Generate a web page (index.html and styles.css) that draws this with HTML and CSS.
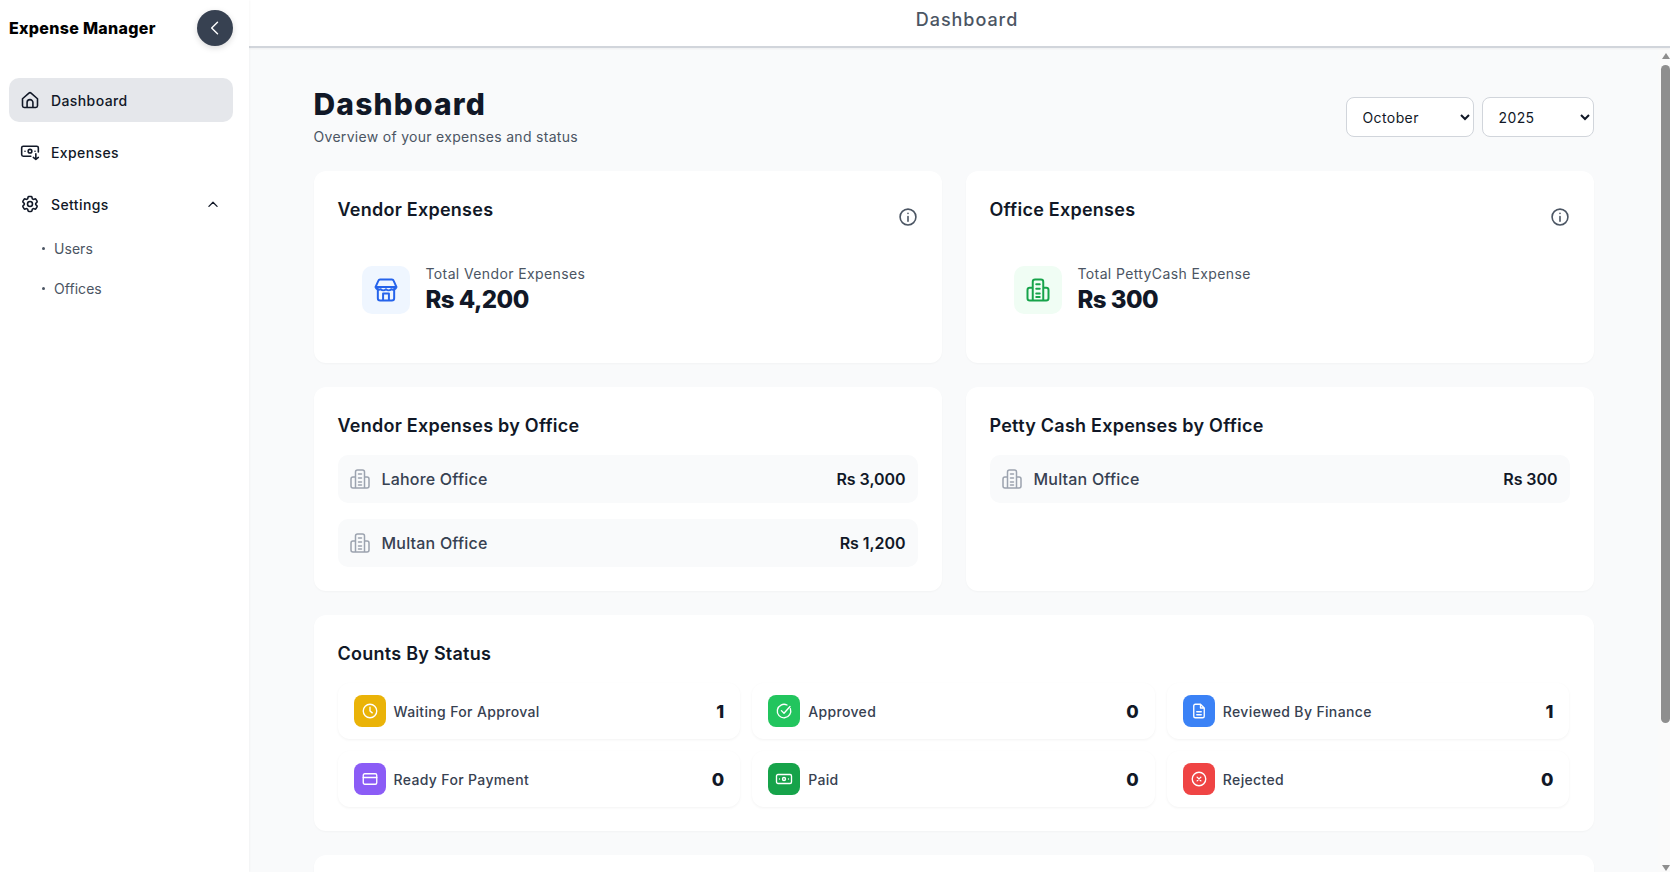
FILE: index.html
```html
<!DOCTYPE html>
<html lang="en">
<head>
<meta charset="utf-8">
<title>Expense Manager</title>
<link rel="stylesheet" href="styles.css">
</head>
<body>
<svg class="defs" aria-hidden="true">
  <symbol id="i-office" viewBox="0 0 24 24"><path d="M7.500 21V5a2 2 0 0 1 2-2h5a2 2 0 0 1 2 2v16M7.500 10H5a2 2 0 0 0-2 2v7a2 2 0 0 0 2 2h14a2 2 0 0 0 2-2v-7a2 2 0 0 0-2-2h-2.500M10.500 7h3M10.500 11h3M10.500 15h3M10.500 18h3"/></symbol>
  <symbol id="i-info" viewBox="0 0 24 24"><circle cx="12" cy="12" r="9.500"/><path d="M12 11.500V17M12 7.600v.2"/></symbol>
</svg>
<aside class="sidebar">
  <div class="brand">
    <span class="brand-name">Expense Manager</span>
    <button class="collapse"><svg class="ico-16" viewBox="0 0 24 24"><path d="M15 5l-7 7 7 7"/></svg></button>
  </div>
  <nav class="nav">
    <a class="nav-item active"><svg class="ico-18" viewBox="0 0 24 24"><path d="M3 10.500 10.700 3.700a2 2 0 0 1 2.600 0L21 10.500V19a2 2 0 0 1-2 2H5a2 2 0 0 1-2-2ZM8.500 21v-6a3.500 3.500 0 0 1 7 0v6"/></svg><span>Dashboard</span></a>
    <a class="nav-item"><svg class="ico-18" viewBox="0 0 24 24"><path d="M13 17H4a2 2 0 0 1-2-2V7a2 2 0 0 1 2-2h16a2 2 0 0 1 2 2v5"/><circle cx="12" cy="11" r="2.200"/><path d="M6 11h.01M18 11h.01M19 14v7M16 18.500l3 2.500 3-2.500"/></svg><span>Expenses</span></a>
    <a class="nav-item"><svg class="ico-18" viewBox="0 0 24 24"><path d="M9.594 3.940c.09-.542.56-.94 1.110-.94h2.593c.55 0 1.020.398 1.110.94l.213 1.281c.063.374.313.686.645.870.074.04.147.083.22.127.325.196.72.257 1.075.124l1.217-.456a1.125 1.125 0 0 1 1.370.49l1.296 2.247a1.125 1.125 0 0 1-.26 1.431l-1.003.827c-.293.241-.438.613-.43.992a7.723 7.723 0 0 1 0 .255c-.008.378.137.75.43.991l1.004.827c.424.35.534.955.26 1.430l-1.298 2.247a1.125 1.125 0 0 1-1.369.491l-1.217-.456c-.355-.133-.75-.072-1.076.124a6.470 6.470 0 0 1-.22.128c-.331.183-.581.495-.644.869l-.213 1.281c-.09.543-.56.94-1.110.94h-2.594c-.55 0-1.019-.398-1.110-.94l-.213-1.281c-.062-.374-.312-.686-.644-.87a6.520 6.520 0 0 1-.22-.127c-.325-.196-.72-.257-1.076-.124l-1.217.456a1.125 1.125 0 0 1-1.369-.49l-1.297-2.247a1.125 1.125 0 0 1 .26-1.431l1.004-.827c.292-.24.437-.613.43-.991a6.932 6.932 0 0 1 0-.255c.007-.38-.138-.751-.43-.992l-1.004-.827a1.125 1.125 0 0 1-.26-1.430l1.297-2.247a1.125 1.125 0 0 1 1.370-.491l1.216.456c.356.133.751.072 1.076-.124.072-.044.146-.086.22-.128.332-.183.582-.495.644-.869l.214-1.280Z"/><path d="M15 12a3 3 0 1 1-6 0 3 3 0 0 1 6 0Z"/></svg><span>Settings</span><svg class="ico-chev" viewBox="0 0 24 24"><path d="M5 16l7-7 7 7"/></svg></a>
    <a class="sub-item">Users</a>
    <a class="sub-item">Offices</a>
  </nav>
</aside>
<div class="shell">
  <header class="topbar">Dashboard</header>
  <div class="viewport">
    <main class="main">
      <div class="content">
        <div class="page-head">
          <div>
            <h1>Dashboard</h1>
            <p>Overview of your expenses and status</p>
          </div>
          <div class="filters">
            <select class="sel-month"><option>October</option></select>
            <select class="sel-year"><option>2025</option></select>
          </div>
        </div>
        <div class="two">
          <section class="card stat-card">
            <div class="card-head"><h2>Vendor Expenses</h2><svg class="ico-info"><use href="#i-info"/></svg></div>
            <div class="stat">
              <div class="stat-ico blue"><svg viewBox="0 0 24 24"><path d="M5 11v8a2 2 0 0 0 2 2h10a2 2 0 0 0 2-2v-8M3 9.500 5.500 4a1.500 1.500 0 0 1 1.400-1h10.200a1.500 1.500 0 0 1 1.400 1L21 9.500M3 9.500a3 3 0 0 0 4.500 1.800 3.200 3.200 0 0 0 4.500 0 3.200 3.200 0 0 0 4.500 0A3 3 0 0 0 21 9.500M3 9.500h18M9.500 21v-6h5v6"/></svg></div>
              <div><div class="stat-label">Total Vendor Expenses</div><div class="stat-value">Rs 4,200</div></div>
            </div>
          </section>
          <section class="card stat-card">
            <div class="card-head"><h2>Office Expenses</h2><svg class="ico-info"><use href="#i-info"/></svg></div>
            <div class="stat">
              <div class="stat-ico green"><svg><use href="#i-office"/></svg></div>
              <div><div class="stat-label">Total PettyCash Expense</div><div class="stat-value">Rs 300</div></div>
            </div>
          </section>
        </div>
        <div class="two">
          <section class="card list-card">
            <h2>Vendor Expenses by Office</h2>
            <div class="rows">
              <div class="row"><svg class="ico-row"><use href="#i-office"/></svg><span class="row-name">Lahore Office</span><span class="row-val">Rs 3,000</span></div>
              <div class="row"><svg class="ico-row"><use href="#i-office"/></svg><span class="row-name">Multan Office</span><span class="row-val">Rs 1,200</span></div>
            </div>
          </section>
          <section class="card list-card">
            <h2>Petty Cash Expenses by Office</h2>
            <div class="rows">
              <div class="row"><svg class="ico-row"><use href="#i-office"/></svg><span class="row-name">Multan Office</span><span class="row-val">Rs 300</span></div>
            </div>
          </section>
        </div>
        <section class="card status-card">
          <h2>Counts By Status</h2>
          <div class="tiles">
            <div class="tile"><span class="tile-ico yellow"><svg viewBox="0 0 24 24"><circle cx="12" cy="12" r="9"/><path d="M12 7v5l3 2.500"/></svg></span><span class="tile-name">Waiting For Approval</span><span class="tile-num">1</span></div>
            <div class="tile"><span class="tile-ico lime"><svg viewBox="0 0 24 24"><path d="M20.500 9A9 9 0 1 1 16 4"/><path d="M8.500 11.500 12 15l8-9"/></svg></span><span class="tile-name">Approved</span><span class="tile-num">0</span></div>
            <div class="tile"><span class="tile-ico azure"><svg viewBox="0 0 24 24"><path d="M14 3H7a2 2 0 0 0-2 2v14a2 2 0 0 0 2 2h10a2 2 0 0 0 2-2V8ZM14 3v5h5M9 13h6M9 17h6"/></svg></span><span class="tile-name">Reviewed By Finance</span><span class="tile-num">1</span></div>
            <div class="tile"><span class="tile-ico violet"><svg viewBox="0 0 24 24"><rect x="3" y="5" width="18" height="14" rx="2"/><path d="M3 10h18"/></svg></span><span class="tile-name">Ready For Payment</span><span class="tile-num">0</span></div>
            <div class="tile"><span class="tile-ico forest"><svg viewBox="0 0 24 24"><rect x="2" y="6" width="20" height="12" rx="2"/><circle cx="12" cy="12" r="2"/><path d="M6 12h.01M18 12h.01"/></svg></span><span class="tile-name">Paid</span><span class="tile-num">0</span></div>
            <div class="tile"><span class="tile-ico red"><svg viewBox="0 0 24 24"><circle cx="12" cy="12" r="9"/><path d="M9.500 9.500l5 5M14.500 9.500l-5 5"/></svg></span><span class="tile-name">Rejected</span><span class="tile-num">0</span></div>
          </div>
        </section>
        <section class="card tail-card"></section>
      </div>
    </main>
    <div class="scrollbar">
      <span class="arrow-up"></span>
      <span class="thumb"></span>
      <span class="arrow-down"></span>
    </div>
  </div>
</div>
</body>
</html>
```
FILE: styles.css
```css
* { box-sizing: border-box; }
html, body { height: 100%; }
body {
  margin: 0;
  display: flex;
  height: 872px;
  overflow: hidden;
  background: #fff;
  color: #111827;
  font-family: "Inter", "Noto Sans", sans-serif;
}
.defs { display: none; }
svg { fill: none; stroke: currentColor; stroke-width: 2; stroke-linecap: round; stroke-linejoin: round; flex: none; }

.sidebar { width: 249px; flex: none; padding: 10px 16px 0 9px; background: #fff; box-shadow: 1px 0 2px rgba(0,0,0,.03); position: relative; z-index: 2; }
.brand { display: flex; align-items: center; justify-content: space-between; height: 36px; }
.brand-name { font-size: 16px; font-weight: 800; color: #000; letter-spacing: .3px; }
.collapse { width: 36px; height: 36px; border: 0; border-radius: 50%; background: #374151; color: #fff; display: flex; align-items: center; justify-content: center; padding: 0; box-shadow: 0 2px 6px rgba(0,0,0,.15); }
.ico-16 { width: 20px; height: 20px; stroke-width: 1.700; }
.nav { margin-top: 32px; display: flex; flex-direction: column; }
.nav-item { height: 44px; display: flex; align-items: center; gap: 11px; padding: 0 12px 0 11px; border-radius: 10px; font-size: 14px; font-weight: 500; color: #111827; margin-bottom: 8px; letter-spacing: .4px; }
.nav-item.active { background: #e5e7eb; }
.ico-18 { width: 20px; height: 20px; stroke-width: 1.900; }
.ico-chev { width: 14px; height: 14px; margin-left: auto; margin-right: 1px; stroke-width: 2.200; }
.sub-item { display: flex; align-items: center; height: 20px; margin: 0 0 20px 33px; font-size: 14px; color: #4b5563; position: relative; padding-left: 12px; letter-spacing: .05px; }
.sub-item::before { content: ""; position: absolute; left: 0; top: 9px; width: 3px; height: 3px; border-radius: 50%; background: #4b5563; }
.nav-item + .sub-item { margin-top: 4px; }

.shell { flex: 1; min-width: 0; display: flex; flex-direction: column; }
.topbar { height: 48px; flex: none; text-align: center; padding: 8px 0 0 15px; font-size: 18px; line-height: 24px; font-weight: 500; color: #4b5563; background: #fff; border-bottom: 2px solid #d1d5db; box-shadow: 0 1px 2px rgba(0,0,0,.05); position: relative; letter-spacing: .95px; }
.viewport { flex: 1; min-height: 0; display: flex; background: #f9fafb; }
.main { flex: 1; min-width: 0; overflow: hidden; }
.content { width: 1280px; margin: 0 auto; padding-top: 37px; display: flex; flex-direction: column; gap: 24px; }

.page-head { display: flex; justify-content: space-between; align-items: flex-start; height: 62px; }
h1 { margin: 0; font-size: 30px; line-height: 39px; font-weight: 800; color: #111827; letter-spacing: 1.150px; }
.page-head p { margin: 3px 0 0; font-size: 14px; line-height: 20px; color: #4b5563; letter-spacing: .3px; }
.filters { display: flex; gap: 8px; margin-top: 12px; }
select { height: 40px; border: 1px solid #d1d5db; border-radius: 8px; background: #fff; padding: 0 4px 0 12px; font: 14px/20px "Inter", sans-serif; color: #111827; letter-spacing: .4px; }
.sel-month { width: 128px; }
.sel-year { width: 112px; }

.two { display: grid; grid-template-columns: 1fr 1fr; gap: 24px; }
.card { background: #fff; border-radius: 12px; box-shadow: 0 1px 2px rgba(0,0,0,.03); padding: 24px; }
h2 { margin: 0; font-size: 18px; line-height: 30px; font-weight: 600; color: #111827; letter-spacing: .25px; }
.stat-card { height: 192px; }
.card-head { display: flex; justify-content: space-between; align-items: flex-start; }
.ico-info { width: 20px; height: 20px; margin-top: 12px; color: #4b5563; stroke-width: 1.900; }
.stat { display: flex; align-items: center; gap: 16px; margin: 37px 0 0 24px; }
.stat-ico { width: 48px; height: 48px; border-radius: 10px; display: flex; align-items: center; justify-content: center; }
.stat-ico svg { width: 28px; height: 28px; stroke-width: 1.700; }
.blue { background: #eff6ff; color: #2563eb; }
.green { background: #f0fdf4; color: #16a34a; }
.stat-label { font-size: 14px; line-height: 20px; color: #4b5563; letter-spacing: .38px; }
.stat-value { font-size: 24px; line-height: 32px; font-weight: 800; color: #111827; letter-spacing: -.55px; }

.list-card { height: 204px; }
.rows { margin-top: 14px; display: flex; flex-direction: column; gap: 16px; }
.row { height: 48px; display: flex; align-items: center; background: #f9fafb; border-radius: 10px; padding: 0 12px 0 10px; }
.ico-row { width: 24px; height: 24px; color: #9ca3af; stroke-width: 1.500; margin-right: 10px; }
.row-name { flex: 1; font-size: 16px; font-weight: 500; color: #374151; letter-spacing: .2px; }
.row-val { font-size: 16px; font-weight: 600; color: #111827; letter-spacing: -.05px; }

.status-card { height: 216px; }
.tiles { margin-top: 14px; display: grid; grid-template-columns: repeat(3, 1fr); gap: 12px; }
.tile { height: 56px; display: flex; align-items: center; gap: 8px; padding: 0 16px; background: #fff; border-radius: 12px; box-shadow: 0 1px 3px rgba(0,0,0,.05); }
.tile-ico { width: 32px; height: 32px; border-radius: 8px; color: #fff; display: flex; align-items: center; justify-content: center; }
.tile-ico svg { width: 18px; height: 18px; stroke-width: 1.800; }
.tile-name { flex: 1; font-size: 14px; font-weight: 500; color: #374151; letter-spacing: .35px; }
.tile-num { font-size: 18px; font-weight: 800; color: #111827; }
.yellow { background: #eab308; }
.lime { background: #22c55e; }
.azure { background: #3b82f6; }
.violet { background: #8b5cf6; }
.forest { background: #16a34a; }
.red { background: #ef4444; }
.tail-card { height: 200px; flex: none; }

.scrollbar { width: 12px; flex: none; background: #fafafa; padding: 5px 0 0 3px; display: flex; flex-direction: column; align-items: center; }
.arrow-up, .arrow-down { width: 0; height: 0; border-left: 4.500px solid transparent; border-right: 4.500px solid transparent; flex: none; }
.arrow-up { border-bottom: 6px solid #8e8e8e; }
.arrow-down { border-top: 6px solid #8e8e8e; }
.thumb { width: 9px; height: 658px; margin: 6px 0 142px; background: #8e8e8e; border-radius: 5px; flex: none; }
```
